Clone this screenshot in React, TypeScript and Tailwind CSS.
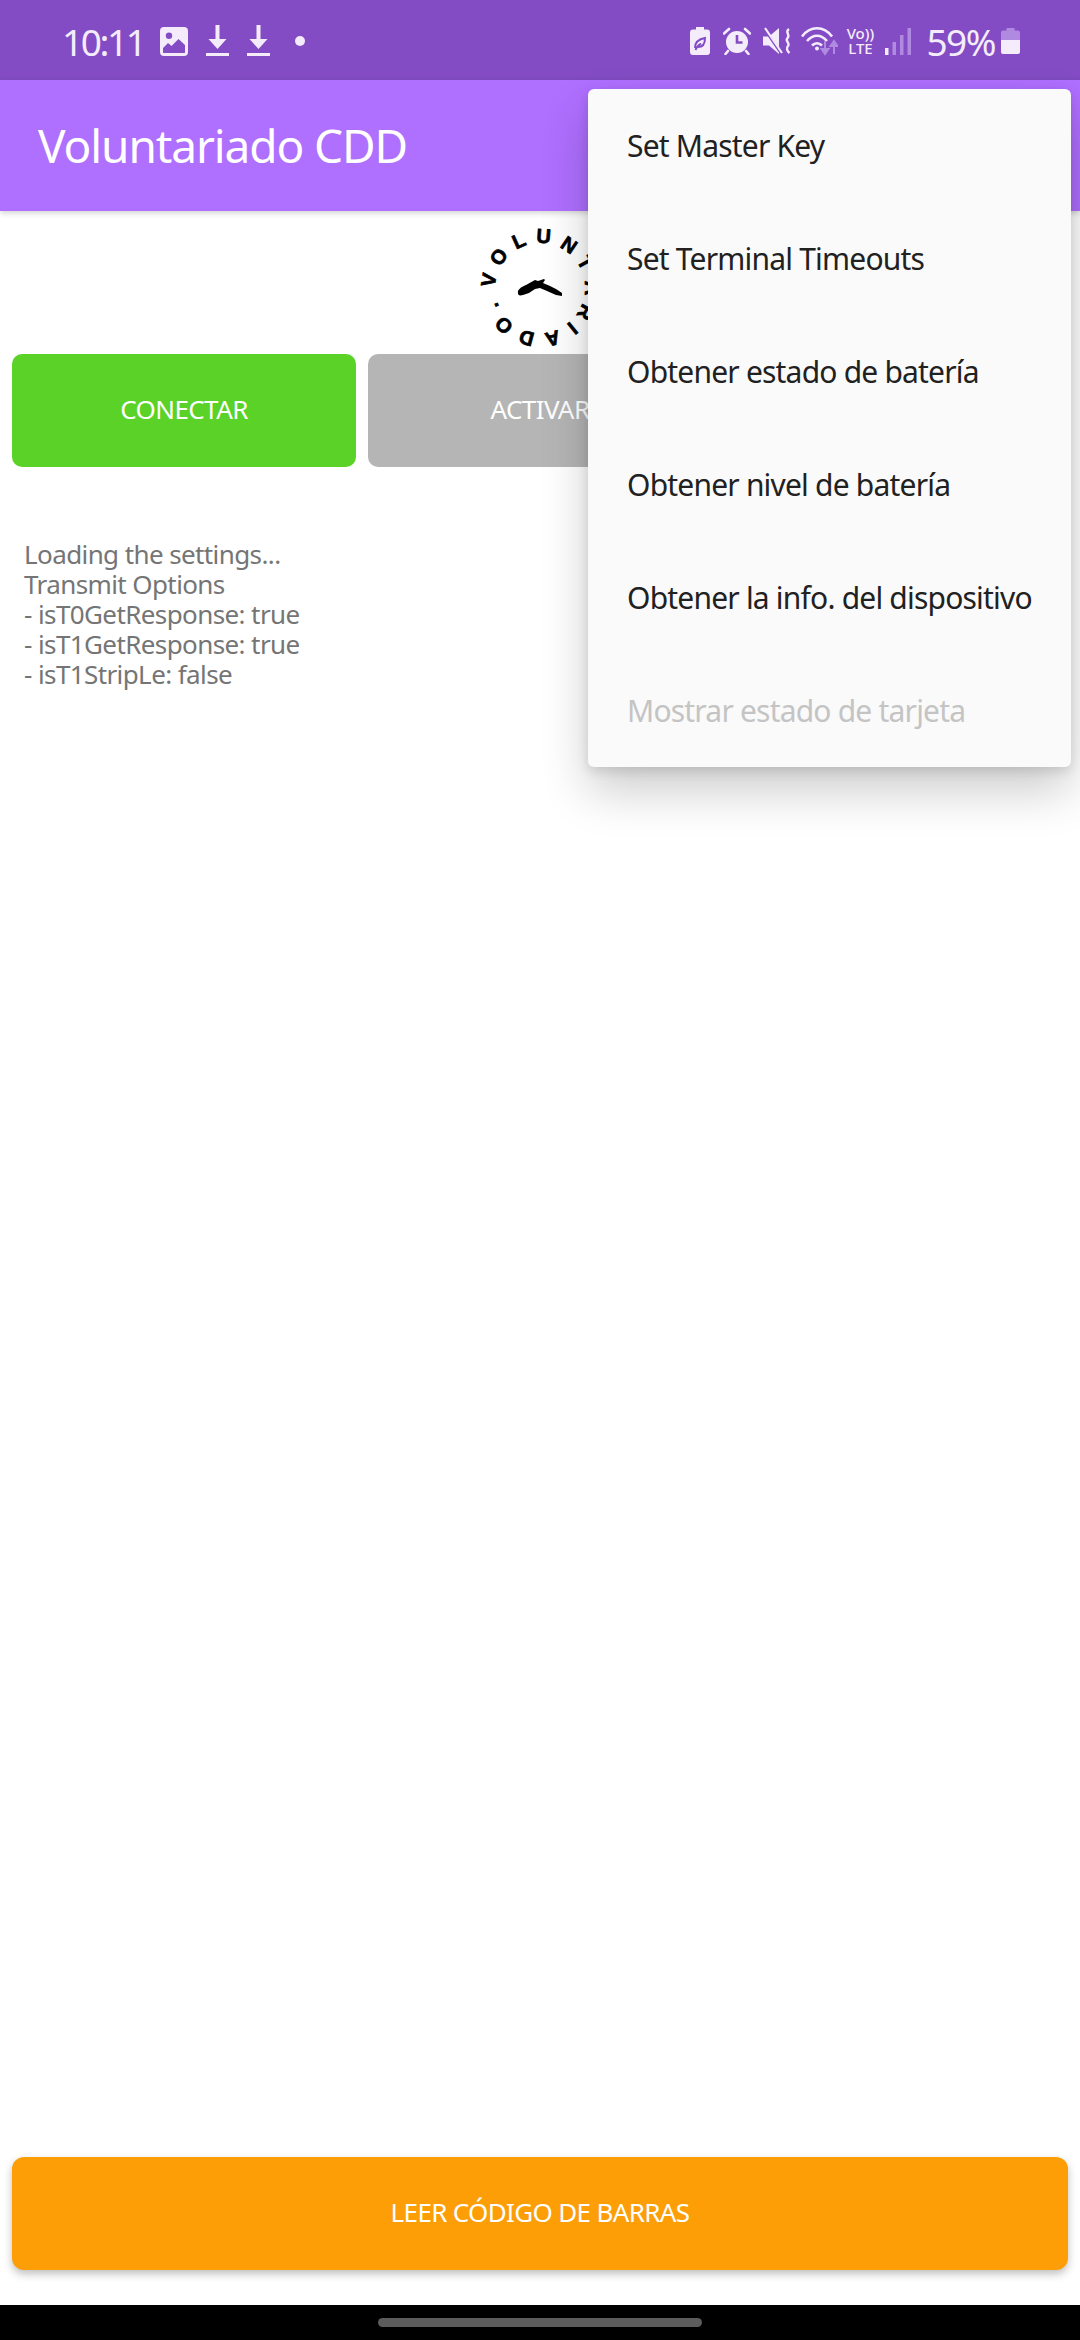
const MENU_ITEMS = [
  { label: "Set Master Key" },
  { label: "Set Terminal Timeouts" },
  { label: "Obtener estado de batería" },
  { label: "Obtener nivel de batería" },
  { label: "Obtener la info. del dispositivo" },
  { label: "Mostrar estado de tarjeta", disabled: true },
];

const LOG_LINES = [
  "Loading the settings...",
  "Transmit Options",
  "- isT0GetResponse: true",
  "- isT1GetResponse: true",
  "- isT1StripLe: false",
];

// clockwise angle from the top of the ring, read off the reference
const LOGO_LETTERS: [string, number][] = [
  ["V", -81],
  ["O", -53],
  ["L", -24],
  ["U", 4],
  ["N", 34],
  ["T", 61],
  ["A", 90],
  ["R", 118],
  ["I", 141],
  ["A", 166],
  ["D", 195],
  ["O", 224],
  [".", 249],
];

function ImageIcon() {
  return (
    <svg width="28" height="29" viewBox="0 0 28 29">
      <path
        fill="#f4ecfb"
        fillRule="evenodd"
        d="M4 0h20a4 4 0 0 1 4 4v21a4 4 0 0 1-4 4H4a4 4 0 0 1-4-4V4a4 4 0 0 1 4-4zM9 5.500a3.200 3.200 0 1 0 0 6.400 3.200 3.200 0 0 0 0-6.400zM3 21v4.200c0 .6.4 .9 1 .9h20c.6 0 1-.3 1-.9V18l-6.500-6-7 7-3.500-3z"
      />
    </svg>
  );
}

function DownloadIcon() {
  return (
    <svg width="23" height="32" viewBox="0 0 23 32" fill="#f4ecfb">
      <path d="M9.500 0h4v14h7L11.500 24 2.500 14h7z" />
      <rect x="0" y="28" width="23" height="3" />
    </svg>
  );
}

function BatterySaverIcon() {
  return (
    <svg width="20" height="28" viewBox="0 0 20 28">
      <path
        fill="#f4ecfb"
        d="M6 0h8v2.500h3a3 3 0 0 1 3 3V25a3 3 0 0 1-3 3H3a3 3 0 0 1-3-3V5.500a3 3 0 0 1 3-3h3z"
      />
      <path
        d="M5 21c0-6 4-9 10-10 0 6-2 9-7 9M5.500 23c1-3 3-5 5.500-6.500"
        fill="none"
        stroke="#834cc4"
        strokeWidth="2"
      />
    </svg>
  );
}

function AlarmIcon() {
  return (
    <svg width="28" height="28" viewBox="0 0 28 28">
      <circle cx="14" cy="15" r="11" fill="#f4ecfb" />
      <path d="M14 8v7.500h5.500" fill="none" stroke="#834cc4" strokeWidth="2.600" />
      <path
        d="M1 6.500 6 2M27 6.500 22 2M5 24l-2.500 3M23 24l2.500 3"
        fill="none"
        stroke="#f4ecfb"
        strokeWidth="2.600"
        strokeLinecap="round"
      />
    </svg>
  );
}

function MuteVibrateIcon() {
  return (
    <svg width="28" height="28" viewBox="0 0 28 28">
      <path fill="#f4ecfb" d="M0 9.500h6L16 1v26L6 18.500H0z" />
      <path d="M1 1l17 25" stroke="#834cc4" strokeWidth="3" />
      <path d="M2 1l17 25" stroke="#f4ecfb" strokeWidth="2.200" />
      <path
        d="M26 2c-5 3 2 6-1.500 9-3 3 3 5 .5 8-2 2-1 5 1.500 7"
        fill="none"
        stroke="#f4ecfb"
        strokeWidth="2.400"
      />
    </svg>
  );
}

function WifiIcon() {
  return (
    <svg width="37" height="30" viewBox="0 0 37 30" fill="none">
      <path d="M1 10.500C9-.5 23-.5 31 10.500" stroke="#f4ecfb" strokeWidth="2.600" />
      <path d="M6 15c6-7 14-7 20 0" stroke="#f4ecfb" strokeWidth="2.600" />
      <path d="M11 19.500c3-3 7-3 10 0" stroke="#f4ecfb" strokeWidth="2.600" />
      <circle cx="16" cy="22.500" r="2" fill="#f4ecfb" />
      <path d="M24 15v12M20.500 23l3.500 5 3.500-5z" stroke="#b08ae0" strokeWidth="2" fill="#b08ae0" />
      <path d="M33 28V16M29.500 20l3.500-5 3.500 5z" stroke="#b08ae0" strokeWidth="2" fill="#b08ae0" />
    </svg>
  );
}

function SignalIcon() {
  return (
    <svg width="26" height="27" viewBox="0 0 26 27">
      <rect x="0" y="20" width="3.500" height="7" fill="#f4ecfb" />
      <rect x="7.500" y="14" width="3.500" height="13" fill="#b08ae0" />
      <rect x="15" y="7" width="3.500" height="20" fill="#b08ae0" />
      <rect x="22.500" y="0" width="3.500" height="27" fill="#b08ae0" />
    </svg>
  );
}

function BatteryIcon() {
  return (
    <svg width="19" height="26" viewBox="0 0 19 26">
      <path fill="#b08ae0" d="M5.500 0h8v2.500H17a2 2 0 0 1 2 2V12H0V4.500a2 2 0 0 1 2-2h3.500z" />
      <path fill="#f4ecfb" d="M0 12h19v12a2 2 0 0 1-2 2H2a2 2 0 0 1-2-2z" />
    </svg>
  );
}

function Logo() {
  return (
    <svg width="130" height="130" viewBox="-65 -65 130 130">
      {LOGO_LETTERS.map(([letter, angle], i) => (
        <text
          key={i}
          transform={`rotate(${angle}) translate(0 -45)`}
          textAnchor="middle"
          fontSize="20"
          fontWeight="700"
          fontFamily="'Liberation Sans', sans-serif"
          fill="#000"
          stroke="#000"
          strokeWidth="0.7"
        >
          {letter}
        </text>
      ))}
      <path
        fill="#000"
        d="M-22 5c-1-3 3-6 8-8l9-5 3 1 6-2 1 1-2 3 7 3 6 3 6 4 0 3-6-1-9-4-7-3-5 1-6 4-6 2c-4 1-5 0-5-2z"
      />
    </svg>
  );
}

function ActionButton({ label, className }: { label: string; className: string }) {
  return (
    <button
      className={`flex h-[113px] shrink-0 items-center justify-center rounded-[10px] pb-[2px] text-[26px] tracking-[-0.6px] text-white ${className}`}
    >
      {label}
    </button>
  );
}

export default function App() {
  return (
    <div className="relative flex h-[2340px] w-[1080px] flex-col overflow-hidden bg-white font-['Noto_Sans',sans-serif]">
      {/* Status bar */}
      <div className="flex h-[80px] shrink-0 items-center justify-between bg-[#834cc4] pl-[62px] pr-[60px] pt-[2px] text-[#f4ecfb]">
        <div className="flex items-center">
          <span className="text-[37px] leading-none tracking-[-2.4px]">10:11</span>
          <div className="ml-[15px] flex items-center gap-[18px]">
            <ImageIcon />
            <DownloadIcon />
            <DownloadIcon />
          </div>
          <div className="ml-[25px] h-[10px] w-[10px] rounded-full bg-[#f4ecfb]" />
        </div>
        <div className="flex items-center">
          <BatterySaverIcon />
          <div className="ml-[13px]">
            <AlarmIcon />
          </div>
          <div className="ml-[12px]">
            <MuteVibrateIcon />
          </div>
          <div className="ml-[10px]">
            <WifiIcon />
          </div>
          <div className="ml-[8px] flex w-[28px] flex-col items-center text-[15px] font-medium leading-[15px]">
            <span>Vo))</span>
            <span>LTE</span>
          </div>
          <div className="ml-[11px]">
            <SignalIcon />
          </div>
          <span className="ml-[15px] text-[37px] leading-none tracking-[-1.5px]">59%</span>
          <div className="ml-[6px]">
            <BatteryIcon />
          </div>
        </div>
      </div>

      {/* Toolbar */}
      <div className="z-10 flex h-[131px] shrink-0 items-center bg-[#af6fff] pb-[2px] pl-[38px] shadow-[0_2px_6px_rgba(0,0,0,0.18)]">
        <h1 className="text-[46px] font-normal leading-none tracking-[-1.1px] text-white">
          Voluntariado CDD
        </h1>
      </div>

      {/* Logo */}
      <div className="flex h-[143px] shrink-0 items-center justify-center pt-[11px]">
        <Logo />
      </div>

      {/* Reader actions */}
      <div className="flex gap-[12px] px-[12px]">
        <ActionButton label="CONECTAR" className="w-[344px] bg-[#5ad227]" />
        <ActionButton label="ACTIVAR" className="w-[344px] bg-[#b5b5b5]" />
        <ActionButton label="" className="w-[344px] bg-[#b5b5b5]" />
      </div>

      {/* Log output */}
      <div className="mt-[72px] flex-1 pl-[24px] text-[26px] leading-[30px] tracking-[-0.6px] text-[#757575]">
        {LOG_LINES.map((line) => (
          <p key={line}>{line}</p>
        ))}
      </div>

      {/* Barcode button */}
      <div className="px-[12px] pb-[35px]">
        <button className="flex h-[113px] w-full items-center justify-center rounded-[12px] bg-[#fd9e07] pb-[2px] text-[26px] tracking-[-0.65px] text-white shadow-[0_4px_8px_rgba(0,0,0,0.25)]">
          LEER CÓDIGO DE BARRAS
        </button>
      </div>

      {/* Navigation bar */}
      <div className="flex h-[35px] shrink-0 items-center justify-center bg-black">
        <div className="h-[9px] w-[324px] rounded-full bg-[#5c5c5c]" />
      </div>

      {/* Overflow menu */}
      <div className="absolute left-[588px] top-[89px] z-20 w-[483px] rounded-[6px] bg-[#fafafa] shadow-[0_24px_48px_rgba(0,0,0,0.2),0_4px_12px_rgba(0,0,0,0.12)]">
        {MENU_ITEMS.map((item) => (
          <div
            key={item.label}
            className={`flex h-[113px] items-center whitespace-nowrap pl-[39px] text-[30px] tracking-[-0.8px] ${
              item.disabled ? "text-[#c4c4c4]" : "text-[#212121]"
            }`}
          >
            {item.label}
          </div>
        ))}
      </div>
    </div>
  );
}
